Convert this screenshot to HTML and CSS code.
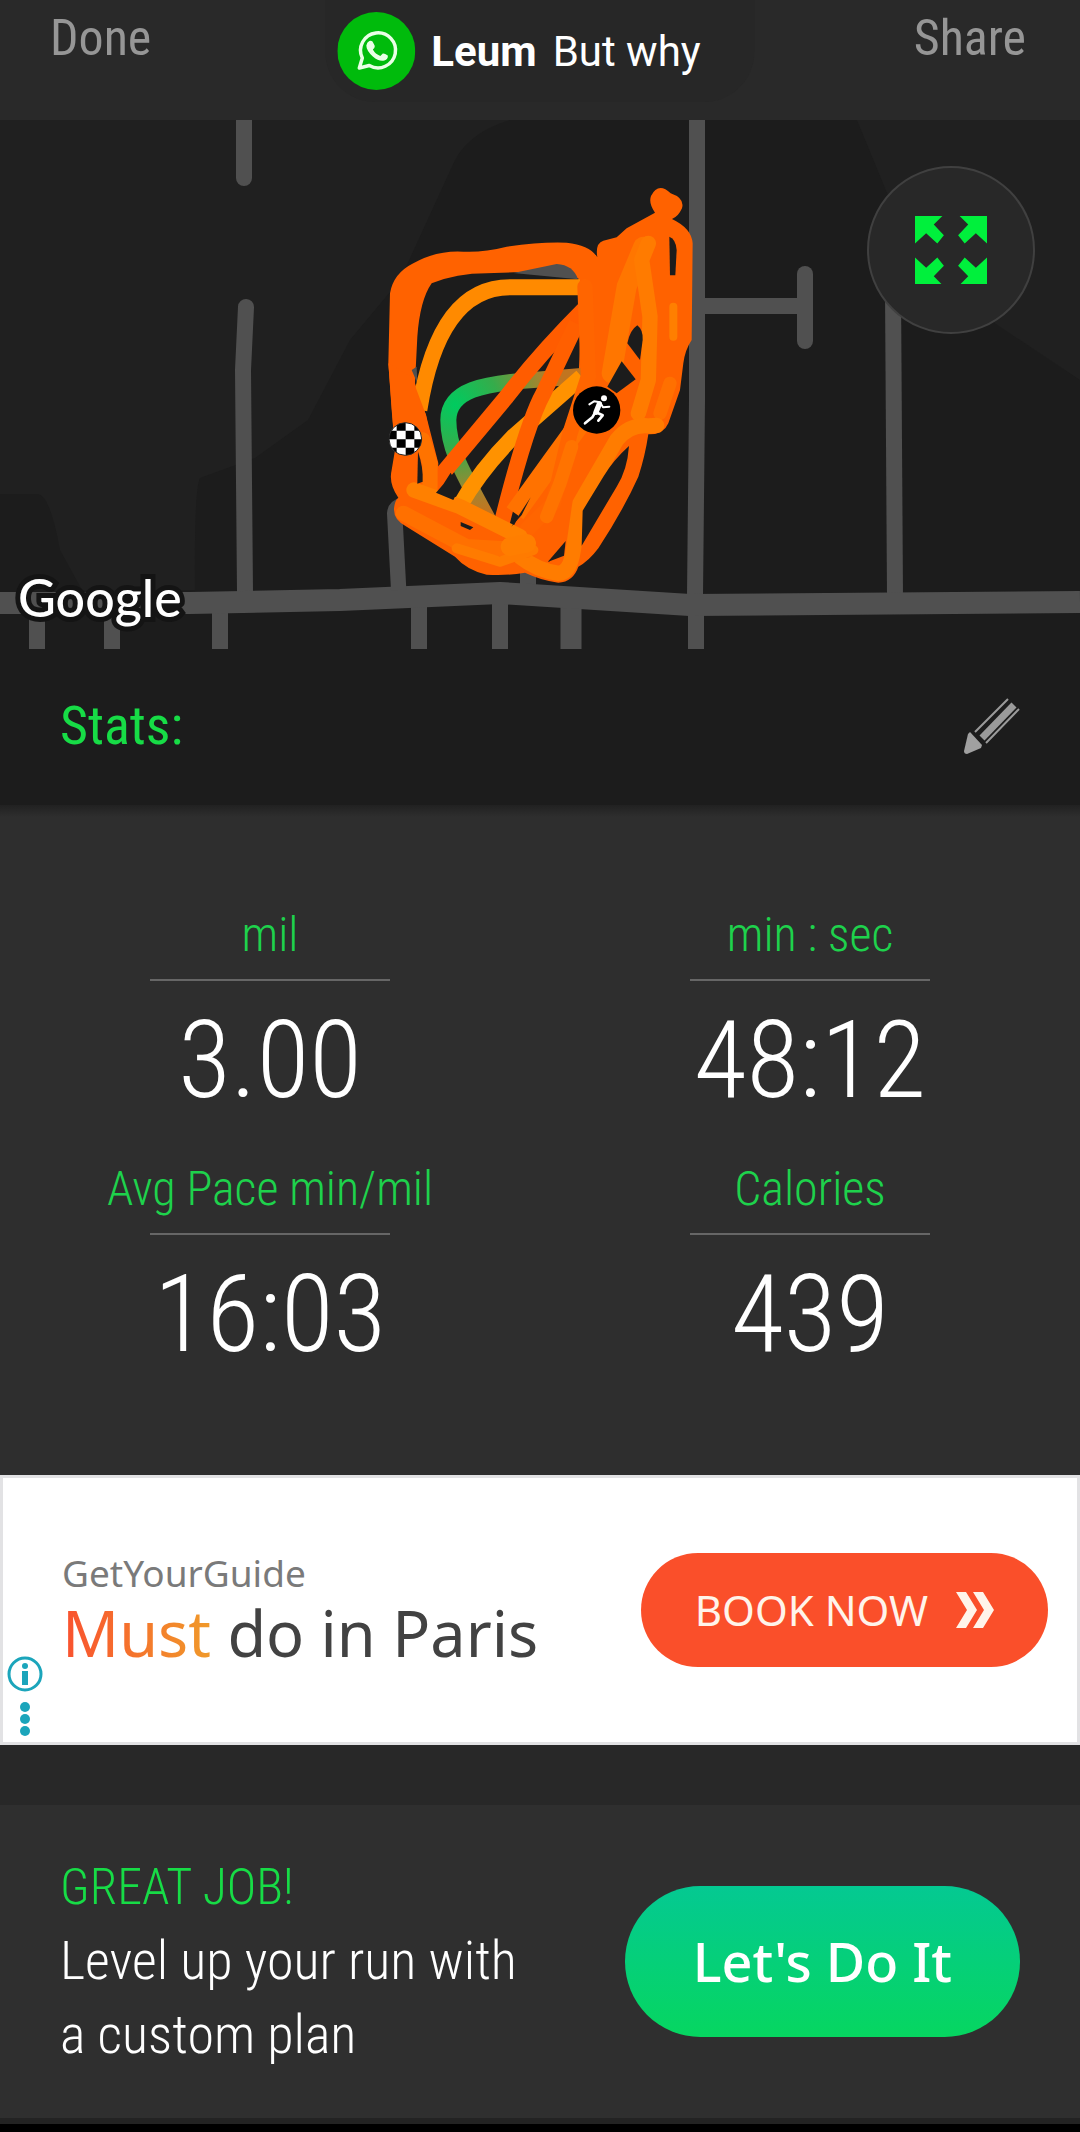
FILE: index.html
```
<!DOCTYPE html>
<html lang="en">
<head>
    <meta charset="UTF-8">
    <meta name="viewport" content="width=device-width, initial-scale=1.0">
    <title>Run Summary</title>
    <link rel="stylesheet" href="styles.css">
</head>
<body>
    <header class="topbar">
        <button type="button" class="topbar-btn">Done</button>
        <button type="button" class="topbar-btn">Share</button>
        <div class="toast" role="status">
            <svg class="toast-icon" viewBox="0 0 78 78" aria-hidden="true">
                <circle cx="39" cy="39" r="39" fill="#00bb0c"/>
                <path d="M22 56 L25 46 A17.500 17.500 0 1 1 32 53.500 Z" fill="none" stroke="#e9ffe6" stroke-width="3.500" stroke-linejoin="round"/>
                <path d="M32 29 Q35 28 36 31 L37.500 34 Q37.500 36 35.500 37.500 Q38 42 43 44 L45.500 41.500 Q47 41 50.500 43.500 Q51 47 47 48.500 Q42 50 35.500 44.500 Q29 38.500 29 33.500 Q29.500 30 32 29 Z" fill="#e9ffe6"/>
            </svg>
            <strong class="toast-name">Leum</strong>
            <span>But why</span>
        </div>
    </header>

    <section class="map">
        <svg class="map-canvas" viewBox="0 120 1080 529" role="img" aria-label="Map of the run">
            <defs>
                <radialGradient id="pace" gradientUnits="userSpaceOnUse" cx="345" cy="765" r="330">
                    <stop offset="0" stop-color="#00cb5f"/>
                    <stop offset="0.4" stop-color="#35ac4b"/>
                    <stop offset="0.8" stop-color="#a3852f"/>
                    <stop offset="1" stop-color="#c17520"/>
                </radialGradient>
                <clipPath id="flag"><circle cx="196" cy="867" r="49"/></clipPath>
            </defs>

            <!-- ground -->
            <rect y="120" width="1080" height="529" fill="#1c1c1c"/>
            <path d="M0 120 H510 Q470 132 455 160 L400 280 L350 340 L308 420 L255 458 L200 478 Q194 490 195 590 H82 L60 550 Q50 495 38 494 H0 Z" fill="#202020"/>
            <path d="M857 120 H1080 V380 L990 320 L890 200 Z" fill="#202020"/>

            <!-- roads -->
            <g fill="none" stroke="#505050" stroke-width="16" stroke-linejoin="round">
                <path d="M244 120 V130"/>
                <path d="M244 120 V178" stroke-linecap="round"/>
                <path d="M246 307 L243 370 L245 592" stroke-linecap="round"/>
                <path d="M528 570 V590"/>
                <path d="M697 120 V400 L695 596"/>
                <path d="M704 306 H805"/>
                <path d="M805 274 V341" stroke-linecap="round"/>
                <path d="M893 290 L895 596"/>
                <path d="M37 610 V649 M112 610 V649 M220 610 V649 M419 606 V649 M500 604 V649 M696 610 V649"/>
                <path d="M571 604 V649" stroke-width="21"/>
                <path d="M0 603 H190 L340 600 L500 593 L690 605 L1080 602" stroke-width="22"/>
            </g>

            <!-- recorded track -->
            <g transform="translate(340 150) scale(.33333)">
                <path d="M176 1320 L164 1090 Q166 1068 190 1066" fill="none" stroke="#505050" stroke-width="46"/>
                <path fill="#ff6200" d="M150 430 Q160 370 220 340 Q290 300 370 305 Q430 308 500 290 Q600 275 680 278 Q750 285 772 322 Q765 280 790 272 L830 262 L860 235 L945 188 Q925 160 933 138 Q955 95 992 130 Q1035 145 1026 175 Q1015 200 996 207 Q1055 235 1058 280 L1055 570 Q1035 600 1030 640 L1020 720 L985 820 Q970 855 925 853 Q915 920 895 980 Q850 1080 775 1195 Q745 1235 715 1250 Q700 1295 655 1298 Q600 1290 555 1268 Q500 1278 440 1274 Q380 1260 345 1220 L200 1130 Q160 1110 162 1075 Q165 1050 175 1043 Q145 1000 155 960 L165 900 L155 780 L145 640 Z"/>
                <path fill="#1c1c1c" d="M275 400 Q350 370 440 370 L540 366 L715 385 L720 580 L715 700 L697 780 L690 830 L640 890 L520 1130 L460 1100 L290 1030 L295 940 L258 795 L225 700 L232 560 Q240 450 275 400 Z"/>
                <path fill="#505050" d="M520 369 L650 342 Q700 345 714 388 Z"/>
                <path fill="#505050" d="M215 660 L230 650 L232 700 Z"/>

                <g fill="none" stroke-width="48">
                    <path d="M238 780 C265 610 330 412 510 412 L720 412" stroke="#ff8a00"/>
                    <path d="M725 678 L580 690 C430 700 326 720 325 810 C325 900 370 970 445 1110" stroke="url(#pace)"/>
                    <path d="M355 1075 Q420 960 520 860 L725 680" stroke="#ff9200"/>
                    <path d="M275 1010 L500 740 Q600 610 740 470" stroke="#ff5c00"/>
                    <path d="M485 1120 Q560 820 610 730 L710 520" stroke="#ff5f00"/>
                    <path d="M525 1090 L640 930 L720 820" stroke="#ff7200" stroke-width="62"/>
                </g>
                <path fill="#ff6200" d="M145 640 L215 680 L258 795 L270 860 L240 900 L165 900 Z"/>

                <!-- faster laps laid over the dense part -->
                <g fill="none" stroke-width="46" stroke-linecap="round" stroke-linejoin="round">
                    <path d="M735 410 L745 680 L690 850 L640 1060 L560 1140" stroke="#ff6500"/>
                    <path d="M910 290 L860 410 L815 670" stroke="#ff7600" stroke-width="60"/>
                    <path d="M925 280 L905 330 L930 500 L925 690 L895 790" stroke="#ff7b00"/>
                    <path d="M1000 470 V560" stroke="#ff7f00" stroke-width="24"/>
                    <path d="M990 700 L960 790" stroke="#ff7000" stroke-width="40"/>
                    <path d="M950 826 L930 828 Q870 820 830 870 L720 1060 L700 1200 Q690 1270 655 1270 Q590 1260 540 1220" stroke="#ff7c00"/>
                    <path d="M695 890 L660 1000 L620 1100" stroke="#ff7300" stroke-width="40"/>
                    <path d="M248 870 L270 940 L270 1030" stroke="#ff7300"/>
                    <path d="M222 1020 L360 1070 L540 1160" stroke="#ff8000"/>
                    <path d="M190 1090 L380 1190 L560 1200" stroke="#ff7000"/>
                    <path d="M350 1195 L480 1235 L580 1200" stroke="#ff7b00" stroke-width="30"/>
                    <path d="M510 1190 L560 1180" stroke="#ff7e00" stroke-width="56"/>
                </g>

                <!-- gaps between laps -->
                <g fill="#1c1c1c">
                    <path d="M988 260 Q1008 268 1010 300 L1006 376 H990 Z"/>
                    <path d="M862 580 Q870 540 892 526 Q910 540 908 570 L900 630 Z"/>
                    <path d="M845 634 L887 688 L830 730 L802 710 Z"/>
                    <path d="M867 888 Q862 960 830 1010 L725 1187 L728 1082 L790 980 Q820 930 867 888 Z"/>
                    <path d="M677 1173 L672 1217 L623 1236 Z"/>
                    <path d="M234 905 Q250 950 248 995 L232 1001 Z"/>
                    <path d="M310 1003 L332 968 L358 1015 L340 1050 L288 1028 Z"/>
                    <path d="M362 1116 L400 1132 L390 1140 L362 1128 Z"/>
                    <path d="M572 1042 L545 1095 L514 1130 Z"/>
                </g>

                <!-- finish marker -->
                <g clip-path="url(#flag)">
                    <rect x="146" y="817" width="100" height="100" fill="#fff"/>
                    <path fill="#000" d="M170 817h27v25h-27z M223 817h25v25h-25z M146 842h24v26h-24z M197 842h26v26h-26z M170 868h27v25h-27z M223 868h25v25h-25z M146 893h24v26h-24z M197 893h26v26h-26z"/>
                </g>
                <circle cx="196" cy="867" r="49" fill="none" stroke="#222" stroke-width="3"/>

                <!-- runner marker -->
                <circle cx="770" cy="780" r="71" fill="#000"/>
                <circle cx="792" cy="745" r="9" fill="#fff"/>
                <g fill="none" stroke="#fff" stroke-linecap="round" stroke-linejoin="round">
                    <path d="M778 762 L768 787" stroke-width="16"/>
                    <path d="M748 763 L762 754 L780 757 L789 772 L808 770" stroke-width="6"/>
                    <path d="M768 787 L788 796 L775 812" stroke-width="8"/>
                    <path d="M765 788 L757 802 L735 820" stroke-width="8"/>
                </g>
            </g>
        </svg>
        <span class="map-brand">Google</span>
        <button type="button" class="expand-btn" aria-label="Expand map">
            <svg viewBox="0 0 71 68" aria-hidden="true">
                <path fill="#00f03c" d="M0 0 H27 L18.500 8.500 L28.500 19 L22 27 L11 17 L0 27 Z M71 0 H44 L52.500 8.500 L42.500 19 L49 27 L60 17 L71 27 Z M0 68 H27 L18.500 59.500 L28.500 49 L22 41 L11 51 L0 41 Z M71 68 H44 L52.500 59.500 L42.500 49 L49 41 L60 51 L71 41 Z"/>
            </svg>
        </button>
    </section>

    <div class="stats-head">
        <h2>Stats:</h2>
        <button type="button" class="edit-btn" aria-label="Edit run">
            <svg viewBox="0 0 56 58" aria-hidden="true">
                <path d="M6 35 L18 48 L17 51 L3 57 Q0 57 0 54 L4 37 Z" fill="#a0a0a0"/>
                <path d="M18 41 L50 8" stroke="#9a9a9a" stroke-width="7"/>
                <path d="M11 35 L44 2 M22 46 L55 12" stroke="#9a9a9a" stroke-width="2"/>
            </svg>
        </button>
    </div>

    <dl class="stats">
        <div class="stat">
            <dt>mil</dt>
            <dd>3.00</dd>
        </div>
        <div class="stat">
            <dt>min : sec</dt>
            <dd>48:12</dd>
        </div>
        <div class="stat">
            <dt>Avg Pace min/mil</dt>
            <dd>16:03</dd>
        </div>
        <div class="stat">
            <dt>Calories</dt>
            <dd>439</dd>
        </div>
    </dl>

    <aside class="ad">
        <div class="ad-text">
            <p class="ad-brand">GetYourGuide</p>
            <p class="ad-title"><span class="ad-accent">Must</span> do in Paris</p>
        </div>
        <a class="ad-btn" href="#">BOOK NOW
            <svg viewBox="0 0 38 36" aria-hidden="true">
                <path d="M0 0 H10 L21 18 L10 36 H0 L11 18 Z M17 0 H27 L38 18 L27 36 H17 L28 18 Z" fill="#fff4ea"/>
            </svg>
        </a>
        <button type="button" class="ad-info" aria-label="Ad options">
            <svg viewBox="0 0 36 84" aria-hidden="true">
                <circle cx="18" cy="18" r="16" fill="none" stroke="#1ba5bb" stroke-width="3"/>
                <g fill="#1ba5bb">
                    <circle cx="18" cy="10" r="3"/>
                    <path d="M15 15h6v14h-6z"/>
                    <circle cx="18" cy="51" r="5"/>
                    <circle cx="18" cy="63" r="5"/>
                    <circle cx="18" cy="75" r="5"/>
                </g>
            </svg>
        </button>
    </aside>

    <section class="promo">
        <div class="promo-text">
            <h2>GREAT JOB!</h2>
            <p>Level up your run with<br>a custom plan</p>
        </div>
        <button type="button" class="promo-btn">Let's Do It</button>
    </section>
</body>
</html>
```
FILE: styles.css
```
* {
    box-sizing: border-box;
}
body {
    margin: 0;
    background-color: #282828;
    color: #fff;
    font-family: "Roboto Condensed", Roboto, sans-serif;
    font-weight: 300;
}
h2, p, dl, dd {
    margin: 0;
    font-weight: inherit;
}
button {
    border: none;
    background: none;
    padding: 0;
    font: inherit;
    cursor: pointer;
}
svg {
    display: block;
}

/* top bar */
.topbar {
    position: relative;
    display: flex;
    justify-content: space-between;
    padding: 6px 54px 50px 50px;
    background-color: #292929;
}
.topbar-btn {
    color: #969696;
    font-size: 50px;
    font-weight: 400;
    line-height: 64px;
}
.toast {
    position: absolute;
    top: 0;
    left: 50%;
    transform: translateX(-50%);
    display: flex;
    align-items: center;
    gap: 16px;
    padding: 12px 54px 12px 12px;
    border-radius: 0 0 50px 50px;
    background-color: #272727;
    font-family: Roboto, sans-serif;
    font-size: 42px;
    font-weight: 400;
    white-space: nowrap;
}
.toast-icon {
    width: 78px;
    height: 78px;
}
.toast-name {
    font-weight: 700;
}

/* map */
.map {
    position: relative;
}
.map-canvas {
    width: 100%;
}
.map-brand {
    position: absolute;
    left: 18px;
    bottom: 20px;
    font-family: Lato, sans-serif;
    font-size: 52px;
    font-weight: 500;
    line-height: 64px;
    -webkit-text-stroke: 10px #141414;
    paint-order: stroke fill;
}
.expand-btn {
    position: absolute;
    top: 46px;
    right: 45px;
    display: flex;
    align-items: center;
    justify-content: center;
    width: 168px;
    height: 168px;
    border: 2px solid #404040;
    border-radius: 50%;
    background-color: #282828;
}
.expand-btn svg {
    width: 72px;
}

/* stats */
.stats-head {
    display: flex;
    align-items: center;
    justify-content: space-between;
    padding: 45px 60px 47px;
    background-color: #1c1c1c;
}
.stats-head h2 {
    color: #17dc46;
    font-size: 54px;
    font-weight: 400;
    line-height: 64px;
}
.edit-btn svg {
    width: 56px;
}
.stats {
    display: grid;
    grid-template-columns: 1fr 1fr;
    row-gap: 18px;
    padding: 98px 0 82px;
    background: linear-gradient(#212121, #2e2e2e 12px);
    text-align: center;
}
.stat dt {
    color: #1ed24c;
    font-size: 48px;
    line-height: 64px;
}
.stat dt::after {
    content: "";
    display: block;
    width: 240px;
    height: 2px;
    margin: 12px auto 0;
    background-color: #666;
}
.stat dd {
    font-size: 108px;
    line-height: 158px;
}

/* ad banner */
.ad {
    position: relative;
    display: flex;
    align-items: center;
    justify-content: space-between;
    padding: 72px 29px 72px 59px;
    border: 3px solid #e2e2e4;
    background-color: #fff;
    font-family: "Noto Sans", sans-serif;
    font-weight: 400;
}
.ad-brand {
    color: #7a7a7a;
    font-size: 37px;
    line-height: 46px;
}
.ad-title {
    color: #424242;
    font-size: 63px;
    line-height: 74px;
}
.ad-accent {
    background: linear-gradient(90deg, #f9512f, #f09a2a);
    -webkit-background-clip: text;
    background-clip: text;
    color: transparent;
}
.ad-btn {
    display: flex;
    align-items: center;
    gap: 28px;
    padding: 29px 54px;
    border-radius: 57px;
    background-color: #fa4f2a;
    color: #fff4ea;
    font-size: 42px;
    line-height: 56px;
    text-decoration: none;
}
.ad-btn svg {
    width: 38px;
}
.ad-info {
    position: absolute;
    left: 4px;
    bottom: 2px;
}
.ad-info svg {
    width: 36px;
}

/* plan offer */
.promo {
    display: flex;
    align-items: center;
    justify-content: space-between;
    margin-top: 60px;
    padding: 45px 60px 52px;
    border-bottom: 8px solid #000;
    background-color: #2f2f2f;
    box-shadow: inset 0 -6px #232323;
    font-size: 54px;
    line-height: 74px;
}
.promo h2 {
    color: #17dc46;
    font-size: 50px;
}
.promo-btn {
    padding: 38px 68px;
    border-radius: 76px;
    background: linear-gradient(#04c992, #06d660);
    color: #fff;
    font-family: "Noto Sans", sans-serif;
    font-size: 54px;
    font-weight: 500;
    line-height: 75px;
}
```
